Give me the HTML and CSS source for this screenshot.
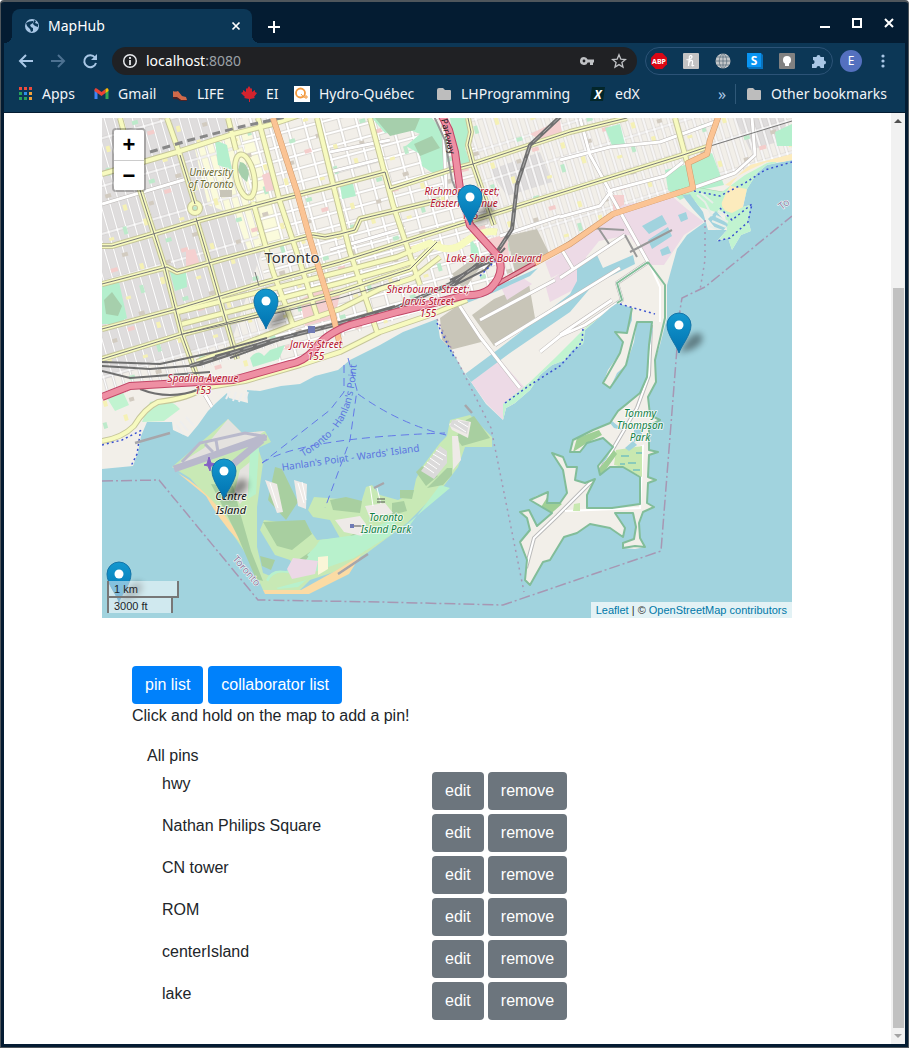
FILE: index.html
```html
<!DOCTYPE html>
<html lang="en">
<head>
<meta charset="utf-8">
<title>MapHub</title>
<link rel="stylesheet" href="styles.css">
</head>
<body>
<div class="window">
  <header class="titlebar">
    <div class="tab">
      <svg class="tab-globe" viewBox="0 0 16 16"><circle cx="8" cy="8" r="7" fill="#a9c7e6"/><path d="M2 5l3-1.500 4-.5v2L6 7l1 2 2 1v3l-2 1-1-3-3-3zM10 2l2 1-1 2 3 1v3l-3-1-2-2z" fill="#0c3756"/></svg>
      <span class="tab-title">MapHub</span>
      <button class="icon-btn" aria-label="Close tab"><svg width="16" height="16" viewBox="0 0 16 16"><path d="M4.500 4.500l7 7M11.500 4.500l-7 7" stroke="#fff" stroke-width="1.700"/></svg></button>
    </div>
    <button class="icon-btn new-tab" aria-label="New tab"><svg width="16" height="16" viewBox="0 0 16 16"><path d="M8 2v12M2 8h12" stroke="#fff" stroke-width="2"/></svg></button>
    <div class="window-controls">
      <button class="icon-btn" aria-label="Minimize"><svg width="16" height="16" viewBox="0 0 16 16"><path d="M3 12h10" stroke="#fff" stroke-width="2"/></svg></button>
      <button class="icon-btn" aria-label="Maximize"><svg width="16" height="16" viewBox="0 0 16 16"><path d="M4 4h8v8H4z" fill="none" stroke="#fff" stroke-width="2"/></svg></button>
      <button class="icon-btn" aria-label="Close"><svg width="16" height="16" viewBox="0 0 16 16"><path d="M4 4l8 8M12 4l-8 8" stroke="#fff" stroke-width="2"/></svg></button>
    </div>
  </header>

  <div class="toolbar">
    <nav class="nav-buttons">
      <button class="icon-btn" aria-label="Back"><svg width="16" height="16" viewBox="0 0 16 16" fill="none" stroke="#a9c7e6" stroke-width="2"><path d="M15 8H3M8 2L2 8l6 6"/></svg></button>
      <button class="icon-btn" aria-label="Forward"><svg width="16" height="16" viewBox="0 0 16 16" fill="none" stroke="#4d7191" stroke-width="2"><path d="M1 8h12M8 2l6 6-6 6"/></svg></button>
      <button class="icon-btn" aria-label="Reload"><svg width="16" height="16" viewBox="0 0 16 16"><path d="M13 4.500A6 6 0 1 0 14 10" fill="none" stroke="#a9c7e6" stroke-width="2"/><path d="M15 1v6H9z" fill="#a9c7e6"/></svg></button>
    </nav>
    <div class="omnibox">
      <svg width="16" height="16" viewBox="0 0 16 16" fill="none" stroke="#e8eaed"><circle cx="8" cy="8" r="6.300" stroke-width="1.500"/><path d="M8 7v5M8 4v2" stroke-width="1.800"/></svg>
      <span class="url">localhost<span class="port">:8080</span></span>
      <svg width="16" height="16" viewBox="0 0 16 16"><path d="M5 4a4 4 0 1 0 3.700 5.500H11V12h3V9.500h1v-3H8.700A4 4 0 0 0 5 4zm0 2.600a1.400 1.400 0 1 1 0 2.800 1.400 1.400 0 0 1 0-2.800z" fill="#c0c2c5"/></svg>
      <svg width="16" height="16" viewBox="0 0 16 16"><path d="M8 1.800l1.800 4.300 4.700.4-3.600 3 1.100 4.600L8 11.600l-4 2.500 1.100-4.600-3.600-3 4.700-.4z" fill="none" stroke="#c0c2c5" stroke-width="1.300"/></svg>
    </div>
    <div class="extensions">
      <svg width="16" height="16" viewBox="0 0 16 16"><path d="M4.700 0h6.600L16 4.700v6.600L11.300 16H4.700L0 11.300V4.700z" fill="#da0715"/><text x="8" y="10.500" class="ext-abp">ABP</text></svg>
      <svg width="16" height="16" viewBox="0 0 16 16"><rect width="16" height="16" rx="1" fill="#c3c3c3"/><path d="M6.500 3L5.500 13M6 9.500C7.500 6.500 10 7 9.500 9.500L9 12.500q1 .8 2-.5M3.500 6.500C6 7.500 9.500 5 9 3.500S6.500 2.500 6.500 3.500" fill="none" stroke="#fff" stroke-width="1.200"/></svg>
      <svg width="16" height="16" viewBox="0 0 16 16"><circle cx="8" cy="8" r="7.500" fill="#c4c7c9"/><path d="M8 0v16M0 8h16M2 4h12M2 12h12M8 0C3 4 3 12 8 16M8 0c5 4 5 12 0 16" fill="none" stroke="#455c6d" stroke-width=".6"/></svg>
      <svg width="16" height="16" viewBox="0 0 16 16"><path d="M0 0h14l2 2v14H2l-2-2z" fill="#0872bd"/><path d="M0 0h14v14H0z" fill="#0994f2"/><text x="7" y="11.500" class="ext-s">S</text></svg>
      <svg width="16" height="16" viewBox="0 0 16 16"><rect width="16" height="16" rx="1" fill="#818181"/><circle cx="8" cy="7" r="4" fill="#fff"/><path d="M6 10h4v3H6z" fill="#fff"/></svg>
      <svg width="16" height="16" viewBox="0 0 16 16"><path d="M2 4h3.500a2 2 0 1 1 4 0H13v3.500a2 2 0 1 1 0 4V15H9.500a2 2 0 0 0-4 0H1v-4a2 2 0 0 0 1-4z" fill="#a9c7e6"/></svg>
    </div>
    <button class="avatar" aria-label="Profile">E</button>
    <button class="icon-btn" aria-label="Menu"><svg width="16" height="16" viewBox="0 0 16 16" fill="#a9c7e6"><circle cx="8" cy="3" r="1.600"/><circle cx="8" cy="8" r="1.600"/><circle cx="8" cy="13" r="1.600"/></svg></button>
  </div>

  <nav class="bookmarks">
    <a href="#"><svg width="14" height="14" viewBox="0 0 14 14"><path d="M0 0h3v3H0zM5 0h3v3H5zM10 0h3v3h-3z" fill="#ee4b3d"/><path d="M0 5h3v3H0z" fill="#27a35c"/><path d="M5 5h3v3H5z" fill="#2d8fe8"/><path d="M10 5h3v3h-3z" fill="#f2a33a"/><path d="M0 10h3v3H0zM5 10h3v3H5z" fill="#27a35c"/><path d="M10 10h3v3h-3z" fill="#f2a33a"/></svg>Apps</a>
    <a href="#"><svg width="15" height="14" viewBox="0 0 14 14"><path d="M0 3l3 2v7H0z" fill="#4285f4"/><path d="M11 5l3-2v9h-3z" fill="#34a853"/><path d="M0 3c0-2 2-2 3-1l4 3 4-3v4L7 9 0 4z" fill="#ea4335"/><path d="M11 2c1-1 3-1 3 1v1l-3 2z" fill="#fbbc04"/></svg>Gmail</a>
    <a href="#"><svg width="16" height="16" viewBox="0 0 16 16"><path d="M1 5q2 1 5 0l4 5 4 1 1 3H9l-4-2-4 0z" fill="#d0694a"/><path d="M1 11l4 0 4 3h6v1H8l-3-2-4 0z" fill="#4b2226"/></svg>LIFE</a>
    <a href="#"><svg width="16" height="16" viewBox="0 0 16 16"><path d="M8 0l2 3 1-1v4l3-2v2l2 1-3 4 1 1-5 1v3H8v-3l-5-1 1-1-4-4 2-1V4l3 2V2l1 1z" fill="#d3232e"/></svg>EI</a>
    <a href="#"><svg width="16" height="16" viewBox="0 0 16 16"><path d="M0 0h16v16H0z" fill="#fff"/><circle cx="6.500" cy="7" r="4.500" fill="none" stroke="#f39a3e" stroke-width="1.800"/><path d="M7 8l3.500 4M12 9v4M10 11h4" stroke="#f39a3e"/></svg>Hydro-Québec</a>
    <a href="#"><svg width="15" height="14" viewBox="0 0 15 14"><path d="M0 3q0-2 2-2h4l2 2h5q1 0 1 1v8q0 1-1 1H1q-1 0-1-1z" fill="#bdbdbd"/></svg>LHProgramming</a>
    <a href="#"><svg width="16" height="16" viewBox="0 0 16 16"><path d="M2 1h13l-2 14H0z" fill="#03262a"/><text x="8" y="12.500" class="edx">X</text></svg>edX</a>
    <button class="more">»</button>
    <a href="#" class="other"><svg width="15" height="14" viewBox="0 0 15 14"><path d="M0 3q0-2 2-2h4l2 2h5q1 0 1 1v8q0 1-1 1H1q-1 0-1-1z" fill="#bdbdbd"/></svg>Other bookmarks</a>
  </nav>

  <div class="viewport">
    <main class="page">
      <div class="map">
        <svg class="map-canvas" viewBox="102 118 690 500" preserveAspectRatio="xMidYMid slice" role="img" aria-label="Map of Toronto">
          <defs>
            <path id="mainland" d="M102 118H792V160L767 165 757 173 747 189 743 207 750 205 748 220 751 231 741 235 732 250 728 238 717 241 727 230 708 230 703 212 690 194 682 195 693 209 705 222 687 235 677 249 667 285 667 318 660 345 655 360 656 382 648 397 650 415 660 420 649 426 649 450 658 452 649 455 648 477 656 480 648 483 647 503 654 507 643 512 639 523 640 538 645 547 635 549 623 548 623 543 634 539 636 527 633 513 615 513 625 528 623 537 610 528 590 524 577 533 564 537 550 560 543 562 530 585 525 580 527 560 520 542 530 530 527 518 520 512 529 510 537 526 552 513 530 500 536 496 548 492 547 503 560 503 567 493 563 470 552 453 563 457 567 467 577 467 575 480 585 483 595 479 587 495 587 508 612 508 640 504 640 477 623 467 610 467 600 475 598 466 606 460 613 447 603 438 587 443 580 452 570 452 573 440 593 430 610 423 614 428 623 430 612 421 618 411 627 405 640 393 647 377 649 345 652 322 637 322 634 342 626 365 617 373 610 388 603 383 608 370 620 353 623 342 615 332 627 333 632 320 632 308 617 303 610 308 585 330 583 344 572 350 565 360 552 365 540 375 530 390 515 403 506 408 503 420 486 404 471 382 465 374 457 360 450 348 440 338 437 319 403 332 380 345 350 360 338 370 315 376 300 384 281 386 260 391 247 390 248 403 229 398 227 393 216 403 208 411 198 425 188 437 173 430 172 422 158 422 147 422 141 436 138 452 133 466 102 469Z"/>
            <clipPath id="land-clip"><use href="#mainland"/></clipPath>
            <clipPath id="city-clip"><path d="M102 118H792V155L757 165 725 180 690 187 610 215 535 260 500 285 380 325 330 340 280 368 195 395 102 430Z"/></clipPath>
            <pattern id="blocks-tall" width="9" height="46" patternUnits="userSpaceOnUse" patternTransform="rotate(-16)">
              <path d="M0 23H9M4.500 0V46" stroke="#c3c0be" stroke-width="2.600"/><path d="M0 23H9M4.500 0V46" stroke="#fff" stroke-width="1.700"/>
            </pattern>
            <pattern id="blocks-wide" width="17" height="13" patternUnits="userSpaceOnUse" patternTransform="rotate(-15)">
              <path d="M0 6H17M7 0V13" stroke="#c8c5c2" stroke-width="3"/><path d="M0 6H17M7 0V13" stroke="#fff" stroke-width="2"/>
            </pattern>
            <pattern id="blocks-east" width="8" height="31" patternUnits="userSpaceOnUse" patternTransform="rotate(-17)">
              <path d="M0 5H8M4 0V31" stroke="#c3c0be" stroke-width="2.600"/><path d="M0 5H8M4 0V31" stroke="#fff" stroke-width="1.700"/>
            </pattern>
            <pattern id="buildings" width="73" height="61" patternUnits="userSpaceOnUse" patternTransform="rotate(-16)">
              <path d="M4 6h4v7H4zM39 15h5v3h-5zM61 48h4v6h-4z" fill="#f5f1b5"/><path d="M20 31h6v4h-6zM55 8h4v8h-4z" fill="#bdeacb"/><path d="M32 45h7v4h-7z" fill="#f4cdcb"/><path d="M47 33h6v4h-6zM14 52h5v4h-5z" fill="#d2cbc0"/>
            </pattern>
            <linearGradient id="pin-fill" x1="0" y1="0" x2="0" y2="1"><stop offset="0" stop-color="#1498cf"/><stop offset="1" stop-color="#0072b0"/></linearGradient>
            <filter id="soft" x="-50%" y="-50%" width="200%" height="200%"><feGaussianBlur stdDeviation="3"/></filter>
            <g id="pin">
              <path d="M0 0L9-14Q20-24 23-17T12-3Z" fill="#000" opacity=".4" filter="url(#soft)"/>
              <path d="M0 0C-2-7-12-18-12-28A12 12 0 0 1 12-28C12-18 2-7 0 0Z" fill="url(#pin-fill)" stroke="#1474a8"/>
              <circle cy="-28" r="4.500" fill="#fff"/>
            </g>
            <path id="college" d="M102 246L112 246 153 234 200 220 280 199 340 184 385 172 390 189 450 170 473 164 570 132 627 118"/>
            <path id="dundas" d="M102 284L167 267 177 272 223 259 260 249 313 235 325 237 340 234 355 230 360 219 440 200"/>
            <path id="queen" d="M102 329L177 309 260 284 340 262 457 225 570 190 683 155 707 147"/>
            <path id="king" d="M102 359L183 334 260 314 340 292 410 269 437 242"/>
            <path id="bathurst" d="M120 118L140 190 165 268 182 335 200 385"/>
            <path id="spadina" d="M167 118L180 155 195 204M196 218L210 265 237 359"/>
            <path id="broadview" d="M468 118L471 132 468 145 473 164 482 190 494 225"/>
            <path id="richmond" d="M178 312L340 272 397 257 430 243"/>
            <path id="eastern" d="M412 250L430 243Q450 255 465 242 482 229 497 232"/>
            <path id="adelaide" d="M182 324L340 283 393 268 415 261"/>
            <path id="front" d="M197 362L293 325 340 309 380 289 413 278 440 257"/>
            <path id="lakeshore-west" d="M102 441Q122 438 134 426 145 408 158 402 190 398 203 388L245 381 300 365 340 352 380 332 430 315 467 300"/>
            <path id="university" d="M228 118L236 150M253 202L273 272 293 325"/>
            <path id="bay" d="M258 118L280 202 300 262 318 319"/>
            <path id="jarvis" d="M317 118L333 184 350 252 377 332"/>
            <path id="parliament" d="M370 118L393 205 420 285"/>
            <path id="bloor" d="M102 174L177 152 233 134 273 124 300 115"/>
            <path id="woodbine" d="M675 118L687 162"/>
            <path id="express" d="M440 112L449 130 455 152 460 189 470 225 497 255Q507 272 490 289 480 296 466 295L397 312 350 325 Q325 334 314 350 303 362 290 364L233 380 130 386 102 397"/>
            <path id="yonge" d="M273 118L297 192 310 239 333 315 340 345"/>
            <path id="lakeshore-east" d="M533 264L570 244 613 214 693 188 688 163 707 154 710 140 720 112"/>
            <path id="rail" d="M190 366L267 342 330 326 393 309 450 284 497 252 512 229 517 185 530 145 562 115"/>
            <path id="port-roads" d="M457 302L480 337 520 388M495 345L620 268M480 320L555 280M562 250l12 20M560 278L625 235M102 204L190 178M560 160L610 147 660 142 715 122M560 217L600 206 612 190 665 176 683 162M693 188L735 173 755 155 752 118M580 118L590 155 612 195M560 335L612 300M608 190L648 262M648 262L617 283 622 300 585 325 560 336 540 352M330 152l60-12M330 250l75-22M443 118l4 90M205 395l14 24M330 172l55-14M500 236l60-20"/>
            <path id="ferry-line" d="M303 457Q340 436 350 405 356 385 357 355"/>
          </defs>

          <rect x="102" y="118" width="690" height="500" fill="#a1d3de"/>
          <use href="#mainland" fill="#f2efe9"/>
          <g clip-path="url(#land-clip)">
            <path d="M102 118H225L240 200 262 250 232 340 102 380ZM735 118h50v22l-35 10ZM490 170l50-18 12 30-45 14Z" fill="#dfdddd"/>
            <path d="M195 150L250 130 285 240 250 255 235 215 208 205Z" fill="#fbfbdc"/>
            <g clip-path="url(#city-clip)">
              <path d="M102 118H240L275 345 102 400Z" fill="url(#blocks-tall)"/>
              <path d="M238 118H470L500 290 280 370Z" fill="url(#blocks-wide)"/>
              <path d="M460 118H792V155L690 187 500 285Z" fill="url(#blocks-east)"/>
              <path d="M102 118H792V300L102 430Z" fill="url(#buildings)"/>
            </g>
            <path d="M102 286l17-4 8 36-10 6-15 0ZM372 118l60 0 15 20 0 38-10 0-15-10-2-12-14-8 14-12-10-4-25 3ZM450 118h16l6 16-7 14 5 15-13 3ZM605 128l15-4 5 20-12 4ZM665 170l20-5 27-12 12 32-24 5-20 10-12-10ZM215 140l12 5 5 25-14-5ZM340 184l12-4 4 16-14 3ZM775 132l17-8v22l-15 0ZM170 272l16-1 1 16-12 4ZM250 358q8-10 14-2l6-6 15-5-6 14-26 8ZM470 238l8 10 3 16-10-8Z" fill="#b4efcd"/>
            <path d="M375 118h45l-5 12-25 6ZM414 144l18-8 8 12-20 8ZM240 162q7 0 9 12l-2 8q-7-5-9-12ZM675 190l20-3 30 5-12 10-25-2ZM104 300l8-8 10 14-4 10-12-2Z" fill="#a6cfac"/>
            <path d="M262 175l10-4 4 18-10 3ZM186 250l9-1 5 16-14 5ZM300 300l25-14 15 8-5 24-30 8ZM485 240l22-6 2 22-8 4ZM530 134l30-14 2 14-18 8ZM612 195l12 0 0 24-10 0Z" fill="#f5d0d0"/>
            <path d="M507 236l30-7 14 28-35 20ZM472 315l22-16 35-15 6 34-41 28ZM440 318l20-14 25 37-35 9-8-10ZM452 274l22-16 10 4-20 28ZM220 190h12v7h-12Z" fill="#c8c5b8"/>
            <path d="M563 245l45-30 15-10 50-8 14 12 17 13-20 13-20 30-14 0-21-30-30 6-24 30-15 12ZM471 382l29-22 25 28-22 32-17-17ZM500 285l20-9 12 8-25 16ZM545 262l18-10 8 16-20 10ZM545 284l40-28 15 20-50 26Z" fill="#eddae6"/>
            <path d="M682 195L693 187 722 192 745 175 767 163 780 160 755 177 741 206 750 205 751 231 732 250 725 238 717 241 727 230 725 215 700 207ZM503 420L503 404 530 382 555 358 585 328 612 306 608 320 585 344 560 363 530 392ZM150 402q20-5 30 7l-16 12-22 1ZM107 398l16-6 6 13-14 6Z" fill="#c1f3d0"/>
            <path d="M725 185Q740 173 767 162H792V154L750 165Q730 180 722 202 720 210 732 213L743 207 747 189ZM522 400L560 365 568 371 540 390Z" fill="#fcebbd"/>
            <path d="M465 374L500 348 570 294 577 281 577 266 597 255 603 268 633 255 635 264 593 285 570 312 510 353 471 382ZM642 226l20-11 5 9-18 10ZM648 240l20-13 4 9-20 13ZM660 250l8-4 3 7-9 3ZM678 215l8-3 2 7-7 3ZM467 300L500 285 538 268 530 276 495 292 462 305ZM708 219l8-8 12 14-8 9Z" fill="#a1d3de"/>
            <path d="M697 195l8 7 7 14M701 193l12 10M709 226l16 6M712 221l14 6M716 216l12 6M718 211l10 5" stroke="#e8eee8" stroke-width="2" fill="none"/>
            <use href="#port-roads" class="street-case"/><use href="#port-roads" class="street"/>
            <g class="road-case"><use href="#college"/><use href="#dundas"/><use href="#queen"/><use href="#king"/><use href="#bathurst"/><use href="#spadina"/><use href="#broadview"/><use href="#richmond"/><use href="#eastern"/><use href="#adelaide"/><use href="#front"/><use href="#lakeshore-west"/><use href="#university"/><use href="#bay"/><use href="#jarvis"/><use href="#parliament"/><use href="#bloor"/><use href="#woodbine"/><ellipse cx="245" cy="176" rx="9" ry="22" transform="rotate(-12 245 176)"/><circle cx="195" cy="208" r="5"/></g>
            <g class="road"><use href="#college"/><use href="#dundas"/><use href="#queen"/><use href="#king"/><use href="#bathurst"/><use href="#spadina"/><use href="#broadview"/><use href="#richmond"/><use href="#adelaide"/><use href="#front"/><use href="#lakeshore-west"/><use href="#university"/><use href="#bay"/><use href="#jarvis"/><use href="#parliament"/><use href="#bloor"/><use href="#woodbine"/><ellipse cx="245" cy="176" rx="9" ry="22" transform="rotate(-12 245 176)"/><circle cx="195" cy="208" r="5"/></g>
            <use href="#eastern" class="road-wide"/>
            <g class="tram"><use href="#college"/><use href="#dundas"/><use href="#queen"/><use href="#king"/><path d="M140 190L165 268 182 335 200 385M180 155L195 204M196 218L210 265 237 359"/><use href="#broadview"/><path d="M707 147L792 121M255 272l4 14M183 334L290 310 340 298 400 280"/></g>
            <path d="M102 362L160 364 215 352 267 338M102 366L150 369 200 365 300 332 350 320M102 371L130 378 210 372M450 280L490 262M445 290l40-20 20-22M455 284l30-28M140 389q30 12 60 0M215 356L340 322 395 306M230 358L290 336" stroke="#6f6f6f" stroke-width="2" fill="none"/>
            <path d="M150 152L190 140 240 127 290 116" stroke="#888" stroke-width="3" stroke-dasharray="8 5" fill="none"/>
            <path d="M432 112L445 140 452 180 470 225M597 226l12 18M560 248l30-20 34 2M630 252l42-22M625 235l12 22" stroke="#999" stroke-width="2" fill="none"/>
            <use href="#rail" class="rail"/><use href="#rail" class="rail-dash"/>
            <g class="orange-case"><use href="#yonge"/><use href="#lakeshore-east"/></g>
            <g class="orange"><use href="#yonge"/><use href="#lakeshore-east"/></g>
            <path d="M497 284L535 263" stroke="#b33c55" stroke-width="5"/><path d="M497 284L535 263" stroke="#e892a2" stroke-width="3"/>
            <use href="#express" class="express-case"/><use href="#express" class="express"/>
            <path d="M651 325l-2 50-12 33-40 68-40 40-23 22-8 30" fill="none" stroke="#bbb" stroke-width="4"/>
            <path d="M651 325l-2 50-12 33-40 68-40 40-23 22-8 30M565 511l75-3 3-62-23 8M650 265l10 22 0 35" fill="none" stroke="#fff" stroke-width="2"/>
            <path d="M616 450L642 446 642 477 623 467 614 465ZM574 504l6-1v8l-7 0Z" fill="#c8e8b0"/><path d="M621 456h8M628 463h8M636 453h6M620 464h5M633 470h7" stroke="#4badc5"/>
            <path d="M577 438l22-8 3 5-15 8-14 9ZM598 470l16-20 3 4-15 21ZM548 496l14 8-16 14-10-3Z" fill="#9fcf95"/>
            <path d="M639 325l14 3-6 35-12-2ZM625 448l8-7 4 4-8 6ZM634 430l8-4 0 12-8 4Z" fill="#a1d3de"/><path d="M641 328l11 2M640 333l11 2M639 338l11 2M638 343l11 2M637 348l11 2M635 353l12 2" stroke="#eee" stroke-width="2"/>
          </g>
          <g class="spit">
            <path id="spit-shore" d="M648 262L617 283 622 300 617 303M648 262L665 285V318L655 360 656 382 648 397 650 415 660 420 649 426 649 450 658 452 649 455 648 477 656 480 648 483 647 503 654 507 643 512 639 523 640 538 645 547 635 546 623 548 623 543 634 539 636 527 633 513 615 513 625 528 623 537 610 528 590 524 577 533 564 537 550 560 543 562 530 585 525 580 527 560 520 542 530 530 527 518 520 512 529 510 537 526 552 513 530 500 548 492 547 503 560 503 567 493 563 470 552 453 563 457 567 467 577 467 575 480 585 483 595 479 587 495 587 508 612 508 640 504 640 477 623 467 610 467 600 475 598 466 613 447 603 438 587 443 580 452 570 452 573 440 593 430 610 423 618 411 640 393 647 377 649 345 652 322 637 322 626 365 610 388 603 383 620 353 623 342 615 332 627 333 632 308"/>
          </g>

          <path d="M172 467L228 419 242 433 265 431 271 442 258 448 263 463 257 507 257 547 263 573 280 580 297 573 290 560 275 555 260 530 264 520 307 526 317 540 340 538 330 520 313 517 308 510 314 497 340 499 361 503 366 487 372 485 380 495 398 500 413 493 416 479 422 467 440 443 447 436 450 420 470 415 492 437 492 447 465 447 458 467 443 487 407 523 367 553 337 571 310 580 300 590 263 590 250 560 210 500 190 478Z" fill="#c8e9b5"/>
          <path d="M204 448L228 419 242 433 265 431 240 447 172 468ZM240 470l10-8-2 32-8 10-6-10Z" fill="#e4e2df"/>
          <path d="M250 450l9-2-3 46-8 5ZM266 580q5-12 20-9l20-8 6 12-14 12-20 2ZM410 525L440 485 450 488 400 530Z" fill="#b8f1cc"/>
          <path d="M182 462L200 443 245 433 267 437M205 444l8 8M216 440l2 12" fill="none" stroke="#b9b9cc" stroke-width="3"/>
          <path d="M174 469L266 437M225 471L262 440" stroke="#b9b9cc" stroke-width="7"/>
          <path d="M178 473Q215 493 246 548 224 528 206 496Z" fill="#fbdba4"/>
          <path d="M263 590l38 0 36-20 24-15-12 19-40 20-44 0Z" fill="#fbdba4"/>
          <path d="M268 582q5-12 20-9l20-8 20-12 24-8-16 20-30 15-30 8Z" fill="#c8e9b5"/>
          <path d="M211 484l22 2 8 30 10 35 12 30-7-2-18-42-15-30ZM275 467l7 2 16 33-12 18-18-20ZM263 522l42-2 7 14-20 16-15-4ZM260 556l15 4-4 10-9-4ZM298 560l12-8 9 5-8 7ZM466 420l8-4 16 22-28 8-6-8ZM416 472l6-6 16 10-12 10ZM443 485l9-10 0-7-5 0-20 20ZM400 490l14 0-2 9-12-1ZM392 503l12-2 3 10-15 4ZM330 500l16-3 16 4-2 12-27-3ZM335 545l20-12 18 5-8 13-16 4Z" fill="#a8cfa0"/>
          <path d="M320 540l35-5 42-17-5 16-38 24-40 14-8-12ZM307 555l10-10 15 12-12 13Z" fill="#b8f1cc"/>
          <path d="M293 558l25 3-3 13-23 5-5-10Z" fill="#ecd8e6"/><path d="M318 557l10-1 0 13-10 6Z" fill="#faf6d8"/>
          <path d="M265 480l12 4 6 28-6 1ZM294 480l13 4-1 25-8-3ZM335 520l25-4 6 8-4 12-18-4ZM365 506l20-3 8 10-23 5ZM449 424l8-5 14 3-3 16-16-8ZM452 436l6 0 3 24-8 10Z" fill="#eeeae7"/>
          <path d="M440 446l7 5 0 12-13 16-13-8ZM452 420l17 2-2 12-17-8Z" fill="#dbdada"/>
          <path d="M436 450l10 6M433 454l10 6M430 458l10 7M427 462l10 7M424 466l10 7M454 424l12 8M458 421l10 6M270 483l8 25M298 483l6 20M302 482l4 18M370 486l3 20M377 488l4 16" stroke="#fff"/>
          <path d="M230 391l-4 8M236 392l-3 9M242 393l-3 9M248 392l-3 8M180 421l8 10M176 425l7 9M186 417l8 9" stroke="#eee" stroke-width="2"/>
          <g fill="none" stroke="#a797b3" stroke-width="1.500"><path d="M102 481L159 480 258 600 380 602 503 605 661 551 680 310 682 298 705 287 792 216" stroke-dasharray="11 3 2 3"/><path d="M437 319L457 360 491 428 524 592M705 220l0 40-5 30" stroke-dasharray="2 4"/></g>
          <g fill="none" stroke="#6479e8" stroke-dasharray="8 5"><path d="M344 365V392L330 410 262 463M348 358L357 390 350 440 325 508M262 463Q300 438 445 433M358 394Q400 424 446 435"/></g>
          <g fill="none" stroke="#3850d0" stroke-width="1.500" stroke-dasharray="2 3"><path d="M102 445L122 440 142 430M140 434l-3 20-6 12M505 403l25-18 30-19 22-24 1-14M620 304l35 10M694 191l26 5 25-13 20-13 27-8M720 208l12 12 20-16-4 18-18 16-13 3M437 323l17 34M480 276l15-15"/></g>
          <path d="M338 574l30-20M465 405l7 8M135 443l35-10M374 488l10-5" stroke="#a7a6aa" stroke-width="2.500"/>
          <path d="M204 465l3-1 2-7 2 6 5 1-5 2-1 5-2-5Z" fill="#8461c4" stroke="#8461c4"/>
          <path d="M308 326h7v7h-7ZM350 524h4v4h-4Z" fill="#6f7ab5"/><path d="M377 499h8M377 502h8M354 526h8" stroke="#555"/>

          <g class="label road-label">
            <text x="462" y="195">Richmond Street;</text><text x="464" y="207">Eastern Avenue</text><text x="470" y="219">155</text>
            <text x="494" y="262">Lake Shore Boulevard</text>
            <text x="428" y="293">Sherbourne Street;</text><text x="428" y="305">Jarvis Street</text><text x="428" y="317">155</text>
            <text x="316" y="348">Jarvis Street</text><text x="316" y="360">155</text>
            <text x="203" y="382">Spadina Avenue</text><text x="203" y="394">153</text>
          </g>
          <g class="label campus"><text x="211" y="176">University</text><text x="211" y="188">of Toronto</text></g>
          <text class="label city" x="292" y="263">Toronto</text>
          <g class="label place"><text x="231" y="500">Centre</text><text x="231" y="514">Island</text></g>
          <g class="label park"><text x="386" y="521">Toronto</text><text x="386" y="533">Island Park</text><text x="640" y="417">Tommy</text><text x="640" y="429">Thompson</text><text x="640" y="441">Park</text></g>
          <g class="ferry"><text transform="translate(351 461) rotate(-8)">Hanlan's Point - Wards' Island</text><text class="ferry-start"><textPath href="#ferry-line">Toronto - Hanlan's Point</textPath></text></g>
          <g class="boundary"><text transform="translate(244 573) rotate(49)">Toronto</text><text transform="translate(786 207) rotate(-38)">To</text></g>
          <text class="parkway" transform="translate(445 137) rotate(77)">Parkway</text>

          <use href="#pin" x="470" y="225"/><use href="#pin" x="266" y="329"/><use href="#pin" x="679" y="353"/><use href="#pin" x="224" y="499"/><use href="#pin" x="119" y="602"/>
        </svg>
        <div class="zoom-control"><button aria-label="Zoom in">+</button><button aria-label="Zoom out">−</button></div>
        <div class="scale"><div class="scale-line metric">1 km</div><div class="scale-line imperial">3000 ft</div></div>
        <div class="attribution"><a href="#">Leaflet</a> | © <a href="#">OpenStreetMap contributors</a></div>
      </div>

      <section class="panel">
        <div class="actions"><button class="btn primary">pin list</button><button class="btn primary">collaborator list</button></div>
        <p class="hint">Click and hold on the map to add a pin!</p>
        <div class="pins">
          <div class="pins-title">All pins</div>
          <ul class="pin-rows">
            <li><span>hwy</span><button class="btn">edit</button><button class="btn">remove</button></li>
            <li><span>Nathan Philips Square</span><button class="btn">edit</button><button class="btn">remove</button></li>
            <li><span>CN tower</span><button class="btn">edit</button><button class="btn">remove</button></li>
            <li><span>ROM</span><button class="btn">edit</button><button class="btn">remove</button></li>
            <li><span>centerIsland</span><button class="btn">edit</button><button class="btn">remove</button></li>
            <li><span>lake</span><button class="btn">edit</button><button class="btn">remove</button></li>
          </ul>
        </div>
      </section>
    </main>
    <div class="scrollbar" aria-hidden="true">
      <svg width="14" height="16" viewBox="0 0 14 16"><path d="M3 10l4-4 4 4z" fill="#505050"/></svg>
      <div class="track"><div class="thumb"></div></div>
      <svg width="14" height="16" viewBox="0 0 14 16"><path d="M3 6h8l-4 4z" fill="#a3a3a3"/></svg>
    </div>
  </div>
</div>
</body>
</html>
```

FILE: styles.css
```css
* { box-sizing: border-box; }
body { margin: 0; background: #fff; font: 16px/24px "Liberation Sans", Arial, sans-serif; color: #212529; }
button { font: inherit; border: 0; padding: 0; background: none; cursor: pointer; }

.window {
  min-height: 100vh;
  display: flex;
  flex-direction: column;
  background: #041c32;
  border: 1px solid #4f565c;
  border-top-width: 2px;
  border-radius: 4px 4px 0 0;
  padding: 0 3px 3px;
}
.icon-btn { display: grid; place-items: center; width: 16px; height: 16px; }

.titlebar { height: 41px; display: flex; align-items: center; color: #fff; font: 14px/20px "Noto Sans", sans-serif; }
.tab {
  align-self: flex-end;
  height: 34px;
  width: 240px;
  margin-left: 8px;
  padding: 0 8px 0 12px;
  display: flex;
  align-items: center;
  gap: 8px;
  background: #0c3756;
  border-radius: 8px 8px 0 0;
  position: relative;
}
.tab::before, .tab::after { content: ""; position: absolute; bottom: 0; width: 8px; height: 8px; }
.tab::before { right: 100%; background: radial-gradient(circle at 0 0, transparent 8px, #0c3756 8px); }
.tab::after { left: 100%; background: radial-gradient(circle at 100% 0, transparent 8px, #0c3756 8px); }
.tab-globe { width: 16px; height: 16px; }
.tab-title { flex: 1; }
.new-tab { margin: 8px 0 0 14px; }
.window-controls { display: flex; gap: 16px; margin-left: auto; padding-right: 8px; }

.toolbar { height: 36px; display: flex; align-items: center; background: #0c3756; font: 14px/20px "Noto Sans", sans-serif; padding-right: 14px; }
.nav-buttons { display: flex; gap: 16px; padding: 0 14px; }
.omnibox { flex: 1; height: 28px; padding: 0 10px; display: flex; align-items: center; gap: 16px; background: #202124; color: #fff; border-radius: 14px; }
.url { flex: 1; margin-left: -8px; }
.port { color: #9aa0a6; }
.extensions { display: flex; gap: 16px; align-items: center; height: 28px; margin-left: 8px; padding: 0 5px; border: 1px solid #2c5377; border-radius: 14px; }
.avatar { width: 22px; height: 22px; margin: 0 13px 0 7px; border-radius: 50%; background: #5470bf; color: #fff; font-size: 12px; line-height: 22px; }
.ext-abp { font: bold 7px "Noto Sans", sans-serif; fill: #fff; text-anchor: middle; }
.ext-s { font: bold 12px "Noto Sans", sans-serif; fill: #fff; text-anchor: middle; }
.edx { font: italic bold 12px "Noto Sans", sans-serif; fill: #fff; text-anchor: middle; }

.bookmarks {
  height: 34px;
  display: grid;
  grid-template-columns: 75px 78px 69px 53px 143px 153px 1fr auto auto;
  align-items: center;
  padding: 0 18px 4px 15px;
  background: #0c3756;
  border-bottom: 1px solid #041c32;
  font: 14px/20px "Noto Sans", sans-serif;
}
.bookmarks a { display: flex; align-items: center; gap: 9px; color: #f1f4f8; text-decoration: none; white-space: nowrap; }
.more { color: #a9c7e6; font-size: 16px; margin-right: 9px; }
.bookmarks .other { border-left: 1px solid #2f5878; padding-left: 11px; }

.viewport { flex: 1; display: flex; background: #fff; }
.page { flex: 1; min-width: 0; padding: 5px 17px 24px 16px; }
.map, .panel { max-width: 690px; margin: 0 auto; }
.map { height: 500px; position: relative; overflow: hidden; background: #a1d3de; }
.map-canvas { display: block; width: 100%; height: 100%; }

.street-case, .street, .road-case, .road, .road-wide, .tram, .orange-case, .orange, .spit { fill: none; stroke-linejoin: round; }
.street-case { stroke: #bcb8b6; stroke-width: 4px; }
.street { stroke: #fff; stroke-width: 3px; }
.road-case { stroke: #c6c69a; stroke-width: 6px; }
.road { stroke: #f7fabf; stroke-width: 4px; }
.road-wide { stroke: #f7fabf; stroke-width: 7px; }
.tram { stroke: #777; stroke-width: 1px; }
.rail { fill: none; stroke: #707070; stroke-width: 4px; }
.rail-dash { fill: none; stroke: #aaa; stroke-width: 1px; stroke-dasharray: 10 4; }
.orange-case { stroke: #d09a6c; stroke-width: 6px; }
.orange { stroke: #fbc494; stroke-width: 5px; }
.express-case { fill: none; stroke: #c24667; stroke-width: 8px; }
.express { fill: none; stroke: #ee8fa3; stroke-width: 6px; }
.spit { stroke: #82bd99; stroke-width: 2px; }

.label { font-family: "Noto Sans", sans-serif; font-style: italic; font-size: 10px; text-anchor: middle; stroke: #fff; stroke-width: 2px; stroke-opacity: .7; stroke-linejoin: round; paint-order: stroke; }
.road-label { fill: #b4122d; }
.campus { fill: #6b6b32; }
.city { font-style: normal; font-size: 15px; fill: #333; }
.place { font-size: 11px; fill: #111; }
.park { fill: #118044; }
.ferry, .boundary, .parkway { font-family: "Noto Sans", sans-serif; font-size: 10px; text-anchor: middle; fill: #5c75e0; }
.ferry-start { text-anchor: start; }
.boundary { fill: #8d7c9d; stroke: #fff; stroke-width: 1px; paint-order: stroke; }
.parkway { font-size: 9px; fill: #222; }

.zoom-control { position: absolute; top: 10px; left: 10px; width: 34px; border: 2px solid rgba(0, 0, 0, .25); border-radius: 4px; background-clip: padding-box; overflow: hidden; }
.zoom-control button { display: block; width: 30px; height: 30px; background: #fff; color: #000; font-size: 22px; font-weight: bold; line-height: 30px; }
.zoom-control button + button { border-top: 1px solid #ccc; line-height: 28px; }
.scale { position: absolute; left: 5px; bottom: 5px; font-size: 11px; line-height: 12px; }
.scale-line { border: 2px solid #777; border-top: 0; padding: 2px 5px 1px; background: rgba(255, 255, 255, .5); white-space: nowrap; height: 17px; }
.metric { width: 72px; }
.imperial { width: 66px; border-bottom: 0; height: 15px; }
.attribution { position: absolute; right: 0; bottom: 0; padding: 0 5px; background: rgba(255, 255, 255, .7); color: #333; font-size: 11px; line-height: 16px; }
.attribution a { color: #0078a8; text-decoration: none; }

.panel { padding: 48px 30px 0; }
.btn { height: 38px; padding: 0 13px; border-radius: 4px; background: #6c757d; color: #fff; white-space: nowrap; }
.primary { background: #0081fb; }
.actions { display: flex; gap: 5px; }
.hint { margin: 0 0 16px; }
.pins { padding-left: 15px; }
.pin-rows { list-style: none; margin: 4px 0 0; padding: 0 0 0 15px; display: grid; gap: 4px; }
.pin-rows li { display: flex; gap: 4px; }
.pin-rows span { width: 266px; }

.scrollbar { width: 14px; display: flex; flex-direction: column; background: #f1f1f1; }
.scrollbar svg { display: block; }
.track { flex: 1; display: flex; flex-direction: column; justify-content: flex-end; align-items: center; }
.thumb { width: 11px; height: 82.3%; background: #c1c1c1; }
```
